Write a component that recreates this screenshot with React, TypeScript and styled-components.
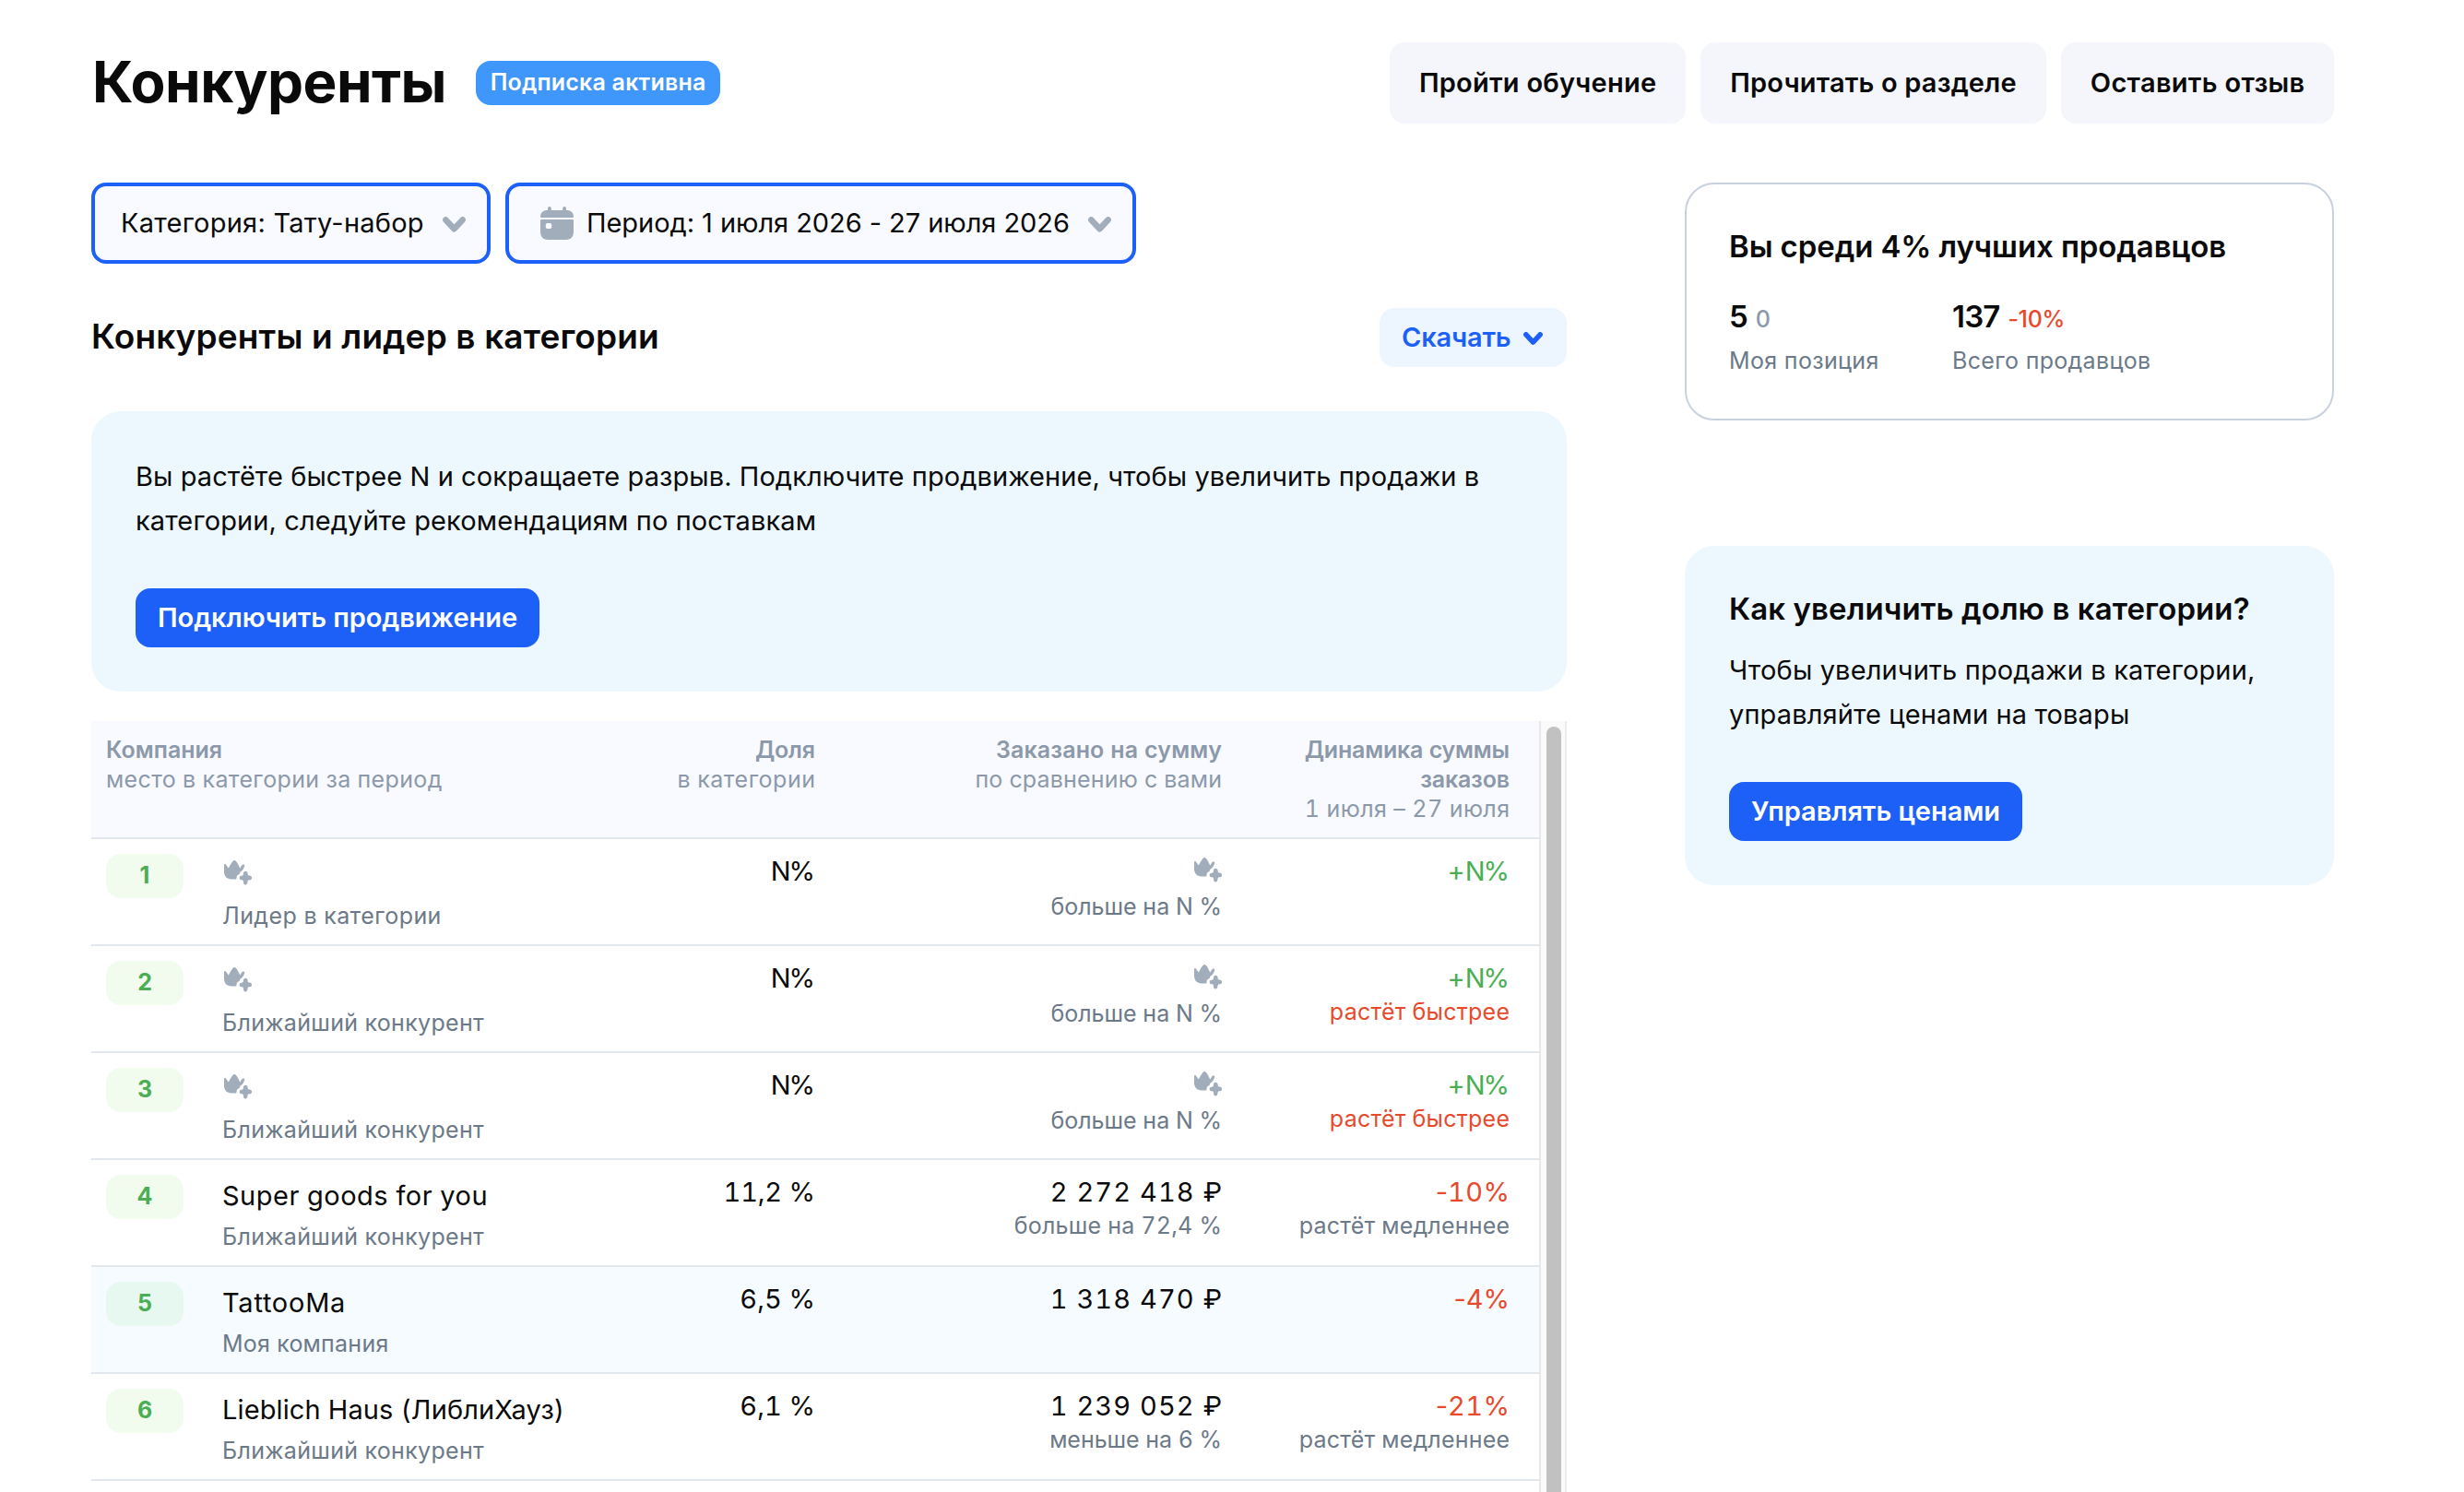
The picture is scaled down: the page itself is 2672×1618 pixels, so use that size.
import React from "react";
import styled, { createGlobalStyle } from "styled-components";

const color = {
  ink: "#0a0a0b",
  muted: "#6b7988",
  faint: "#8b99aa",
  icon: "#a2adbb",
  blue: "#1c60f8",
  badge: "#3f96fb",
  sky: "#ecf7fe",
  red: "#e8492b",
  green: "#4bae54",
  line: "#e2e7ed",
};

const GlobalStyle = createGlobalStyle`
  * { box-sizing: border-box; }
  html, body { margin: 0; background: #fff; }
  body {
    height: 1618px;
    overflow: hidden;
    font-family: Inter, "Liberation Sans", sans-serif;
    font-size: 29px;
    color: ${color.ink};
    -webkit-font-smoothing: antialiased;
  }
  button { font: inherit; border: 0; cursor: pointer; }
`;

const Page = styled.div`
  width: 2672px;
  height: 1618px;
  overflow: hidden;
  padding: 46px 141px 0 99px;
`;

const Track = styled.span<{ $ls: number }>`
  letter-spacing: ${(p) => p.$ls}px;
  margin-right: ${(p) => -p.$ls}px;
`;

const Header = styled.header`
  display: flex;
  align-items: center;
  height: 88px;
`;

const Title = styled.h1`
  margin: 0;
  padding: 0 0 3px 1px;
  font-size: 62px;
  font-weight: 700;
  line-height: 72px;
  letter-spacing: -0.54px;
  width: 417px;
`;

const Badge = styled.span`
  display: flex;
  align-items: center;
  justify-content: center;
  width: 265px;
  height: 48px;
  padding-bottom: 2px;
  border-radius: 16px;
  background: ${color.badge};
  color: #fff;
  font-size: 25px;
  font-weight: 600;
`;

const HeaderActions = styled.div`
  display: flex;
  gap: 16px;
  margin-left: auto;
`;

const GhostButton = styled.button<{ $w: number }>`
  width: ${(p) => p.$w}px;
  height: 88px;
  padding: 0 0 1px;
  border-radius: 16px;
  background: #f5f6fb;
  color: ${color.ink};
  font-weight: 600;
`;

const Columns = styled.div`
  display: flex;
  align-items: flex-start;
  justify-content: space-between;
  margin-top: 64px;
`;

const Main = styled.main`
  width: 1600px;
`;

const Aside = styled.aside`
  width: 704px;
  display: flex;
  flex-direction: column;
  gap: 136px;
`;

const Filters = styled.div`
  display: flex;
  gap: 16px;
`;

const Filter = styled.button<{ $w: number; $left: number }>`
  display: flex;
  align-items: center;
  width: ${(p) => p.$w}px;
  height: 88px;
  padding: 0 23px 1px ${(p) => p.$left}px;
  border: 4px solid ${color.blue};
  border-radius: 16px;
  background: #f9faff;
  color: ${color.ink};
  white-space: nowrap;

  svg:last-child { margin: 3px 0 0 auto; }
`;

const CalendarSvg = styled.svg`
  margin-right: 14px;
`;

const SectionHead = styled.div`
  display: flex;
  align-items: center;
  justify-content: space-between;
  height: 64px;
  margin-top: 48px;
`;

const SectionTitle = styled.h2`
  margin: 0;
  padding-bottom: 3px;
  font-size: 37px;
  font-weight: 600;
  line-height: 48px;
  white-space: nowrap;
`;

const Download = styled.button`
  display: flex;
  align-items: center;
  justify-content: space-between;
  width: 203px;
  height: 64px;
  padding: 0 26px 1px 24px;
  border-radius: 16px;
  background: #edf6fe;
  color: ${color.blue};
  font-weight: 600;

  svg { margin-top: 3px; }
`;

const Notice = styled.section`
  margin-top: 48px;
  padding: 47px 48px 48px;
  border-radius: 32px;
  background: ${color.sky};
`;

const Copy = styled.p`
  margin: 0 0 49px;
  line-height: 48px;
  white-space: nowrap;
`;

const Primary = styled.button<{ $w: number }>`
  display: block;
  width: ${(p) => p.$w}px;
  height: 64px;
  padding: 0 0 1px;
  border-radius: 16px;
  background: ${color.blue};
  color: #fff;
  font-weight: 600;
`;

const TableFrame = styled.section`
  display: flex;
  height: 836px;
  margin-top: 32px;
`;

const Table = styled.div`
  width: 1570px;
  height: 836px;
  overflow: hidden;
  font-variant-numeric: tabular-nums;
`;

const Scrollbar = styled.div`
  width: 30px;
  padding: 6px 4px 0 6px;
  border-left: 2px solid #e8e8e8;
  border-right: 2px solid #ececec;
  background: #fafafa;
`;

const Thumb = styled.div`
  width: 16px;
  height: 900px;
  border-radius: 8px;
  background: #c1c1c1;
`;

const Row = styled.div<{ $mine?: boolean; $head?: boolean }>`
  display: grid;
  grid-template-columns: 124px 421px 224px 441px 312px;
  height: ${(p) => (p.$head ? 128 : 116)}px;
  padding: 15px 32px 0 16px;
  border-bottom: 2px solid ${color.line};
  background: ${(p) => (p.$head ? "#f9faff" : p.$mine ? "#f5fbff" : "#fff")};
`;

const HeadCell = styled.div<{ $right?: boolean; $span?: number; $inset?: number }>`
  grid-column: span ${(p) => p.$span ?? 1};
  padding-left: ${(p) => p.$inset ?? 0}px;
  text-align: ${(p) => (p.$right ? "right" : "left")};
  font-size: 25px;
  line-height: 32px;
  color: ${color.faint};
`;

const HeadTitle = styled.div`
  font-weight: 600;
`;

const Rank = styled.div<{ $mine?: boolean }>`
  width: 84px;
  height: 48px;
  margin-top: 1px;
  border-radius: 16px;
  background: ${(p) => (p.$mine ? "#e6f8ef" : "#f1fcef")};
  color: ${color.green};
  font-size: 25px;
  font-weight: 700;
  line-height: 46px;
  text-align: center;
  font-variant-numeric: normal;
`;

const Cell = styled.div<{ $right?: boolean }>`
  display: flex;
  flex-direction: column;
  align-items: ${(p) => (p.$right ? "flex-end" : "flex-start")};
  white-space: nowrap;
`;

const Name = styled.div`
  height: 52px;
  padding-left: 2px;
  line-height: 48px;
`;

const HiddenName = styled.div`
  height: 52px;
  padding: 7px 0 0 4px;
`;

const HiddenSum = styled.div`
  height: 42px;
  padding-top: 4px;
`;

const Value = styled.div<{ $tone?: string }>`
  line-height: 40px;
  color: ${(p) => p.$tone ?? color.ink};
`;

const Sign = styled.span`
  font-variant-numeric: normal;
`;

const Sub = styled.div<{ $tone?: string; $indent?: number }>`
  padding-left: ${(p) => p.$indent ?? 0}px;
  font-size: 25px;
  line-height: 32px;
  color: ${(p) => p.$tone ?? color.muted};
`;

const RatingCard = styled.section`
  height: 258px;
  padding: 47px 46px;
  border: 2px solid #c8d1dd;
  border-radius: 32px;
`;

const TipCard = styled.section`
  height: 368px;
  padding: 48px;
  border-radius: 32px;
  background: ${color.sky};
`;

const CardTitle = styled.h3<{ $gap: number }>`
  margin: 0 0 ${(p) => p.$gap}px;
  font-size: 33px;
  font-weight: 600;
  line-height: 40px;
  white-space: nowrap;
`;

const Stats = styled.div`
  display: grid;
  grid-template-columns: 242px 1fr;
`;

const StatValue = styled.div`
  display: flex;
  align-items: baseline;
  gap: 8px;
  height: 40px;
  margin-bottom: 12px;
  font-size: 33px;
  font-weight: 600;
  line-height: 40px;
`;

const Delta = styled.span<{ $tone: string }>`
  color: ${(p) => p.$tone};
  font-size: 25px;
  font-weight: 500;
`;

function Chevron({ tint, width }: { tint: string; width: number }) {
  return (
    <svg width={width} height={width * 0.68} viewBox="0 0 25 17" fill="none">
      <path
        d="M3.4 3.4 12.5 13.2 21.6 3.4"
        stroke={tint}
        strokeWidth="6.6"
        strokeLinecap="round"
        strokeLinejoin="round"
      />
    </svg>
  );
}

function Calendar() {
  return (
    <CalendarSvg width="36" height="36" viewBox="0 0 36 36" fill={color.icon}>
      <path d="M8 2a1.9 1.9 0 0 1 3.8 0v2h12.4V2a1.9 1.9 0 0 1 3.8 0v2h1.5A6.5 6.5 0 0 1 36 10.5V11a1 1 0 0 1-1 1H1a1 1 0 0 1-1-1v-.5A6.5 6.5 0 0 1 6.500 4H8Z" />
      <path
        fillRule="evenodd"
        d="M1 14h34a1 1 0 0 1 1 1v11c0 7.500-2.500 10-10 10H10C2.500 36 0 33.500 0 26V15a1 1 0 0 1 1-1Zm6.500 4a1.700 1.700 0 0 0-1.700 1.700v2.600A1.700 1.700 0 0 0 7.500 24h3a1.700 1.700 0 0 0 1.700-1.700v-2.600a1.700 1.700 0 0 0-1.700-1.700Z"
      />
    </CalendarSvg>
  );
}

function CrownPlus() {
  return (
    <svg width="30" height="27" viewBox="0 0 30 27" fill={color.icon}>
      <path d="M0 5.200C0 4.100 1.300 3.700 1.900 4.600L4.800 8.600C6.200 5.800 7.700 3.200 9.400 1 10.300-.2 12-.2 13 1 14.600 3 16 5.600 17.200 8.600L19.500 5.100C20.300 3.900 22.600 4.200 22.200 6.100 21.700 8.300 20.600 10.200 19.200 11.600 17.700 12.100 17.100 13.300 16.700 14.800 14.600 15.500 13.500 17 13.600 18.800L13.200 20.400C11 20.600 7.600 20.600 5.300 20 1.900 19.100 0 16 0 12Z" />
      <path d="M23.300 11.700c1.400 0 2.300 1 2.300 2.500 0 1.600.5 2.400 2 2.400 1.500 0 2.400.9 2.400 2.300s-.9 2.400-2.400 2.400c-1.500 0-2 .6-2.200 2.400-.2 1.800-.9 2.700-2.200 2.700-1.400 0-2.100-.9-2.200-2.700-.1-1.800-.600-2.400-2-2.400-1.400 0-2.300-.9-2.300-2.300s.9-2.300 2.300-2.300c1.400 0 2-.8 2-2.400 0-1.600.900-2.600 2.300-2.600Z" />
    </svg>
  );
}

type Spaced = [string, number];

type Item = {
  name?: Spaced;
  note: Spaced;
  share: Spaced;
  sum?: Spaced;
  compare?: Spaced;
  change: Spaced;
  up?: boolean;
  pace?: Spaced;
  paceAlert?: boolean;
  mine?: boolean;
};

const rival: Spaced = ["Ближайший конкурент", 0.32];
const faster: Spaced = ["растёт быстрее", 0.24];
const slower: Spaced = ["растёт медленнее", 0.2];
const hiddenShare: Spaced = ["N%", -2];
const hiddenCompare: Spaced = ["больше на N %", 0];
const hiddenChange: Spaced = ["+N%", -2];

const items: Item[] = [
  { note: ["Лидер в категории", 0.44], share: hiddenShare, compare: hiddenCompare, change: hiddenChange, up: true },
  { note: rival, share: hiddenShare, compare: hiddenCompare, change: hiddenChange, up: true, pace: faster, paceAlert: true },
  { note: rival, share: hiddenShare, compare: hiddenCompare, change: hiddenChange, up: true, pace: faster, paceAlert: true },
  { name: ["Super goods for you", 0.49], note: rival, share: ["11,2 %", -0.2], sum: ["2 272 418 ₽", 1.1], compare: ["больше на 72,4 %", 0.2], change: ["-10%", 0.4], pace: slower },
  { name: ["TattooMa", 0.75], note: ["Моя компания", 0.25], share: ["6,5 %", 0], sum: ["1 318 470 ₽", 1.1], change: ["-4%", 0], mine: true },
  { name: ["Lieblich Haus (ЛиблиХауз)", 0.12], note: rival, share: ["6,1 %", 0], sum: ["1 239 052 ₽", 1.1], compare: ["меньше на 6 %", -0.05], change: ["-21%", 0.4], pace: slower },
];

function T({ t }: { t: Spaced }) {
  return <Track $ls={t[1]}>{t[0]}</Track>;
}

function CompetitorRow({ item, rank }: { item: Item; rank: number }) {
  const [change, changeSpacing] = item.change;
  return (
    <Row $mine={item.mine}>
      <Rank $mine={item.mine}>{rank}</Rank>
      <Cell>
        {item.name ? <Name><T t={item.name} /></Name> : <HiddenName><CrownPlus /></HiddenName>}
        <Sub $indent={2}><T t={item.note} /></Sub>
      </Cell>
      <Cell $right>
        <Value><T t={item.share} /></Value>
      </Cell>
      <Cell $right>
        {item.sum ? <Value><T t={item.sum} /></Value> : <HiddenSum><CrownPlus /></HiddenSum>}
        {item.compare && <Sub><T t={item.compare} /></Sub>}
      </Cell>
      <Cell $right>
        <Value $tone={item.up ? color.green : color.red}>
          <Sign>{change[0]}</Sign>
          <T t={[change.slice(1), changeSpacing]} />
        </Value>
        {item.pace && <Sub $tone={item.paceAlert ? color.red : color.muted}><T t={item.pace} /></Sub>}
      </Cell>
    </Row>
  );
}

export default function App() {
  return (
    <>
      <GlobalStyle />
      <Page>
        <Header>
          <Title>Конкуренты</Title>
          <Badge><T t={["Подписка активна", 0.2]} /></Badge>
          <HeaderActions>
            <GhostButton $w={321}><T t={["Пройти обучение", 0.24]} /></GhostButton>
            <GhostButton $w={375}><T t={["Прочитать о разделе", 0.16]} /></GhostButton>
            <GhostButton $w={296}><T t={["Оставить отзыв", 0.29]} /></GhostButton>
          </HeaderActions>
        </Header>

        <Columns>
          <Main>
            <Filters>
              <Filter $w={433} $left={28}>
                <T t={["Категория: Тату-набор", 0.24]} />
                <Chevron tint={color.icon} width={25} />
              </Filter>
              <Filter $w={684} $left={34}>
                <Calendar />
                <T t={["Период: 1 июля 2026 - 27 июля 2026", -0.05]} />
                <Chevron tint={color.icon} width={25} />
              </Filter>
            </Filters>

            <SectionHead>
              <SectionTitle><T t={["Конкуренты и лидер в категории", 0.15]} /></SectionTitle>
              <Download>
                <T t={["Скачать", -0.2]} />
                <Chevron tint={color.blue} width={21} />
              </Download>
            </SectionHead>

            <Notice>
              <Copy>
                <T t={["Вы растёте быстрее N и сокращаете разрыв. Подключите продвижение, чтобы увеличить продажи в", 0.07]} />
                <br />
                <T t={["категории, следуйте рекомендациям по поставкам", 0.11]} />
              </Copy>
              <Primary $w={438}><T t={["Подключить продвижение", -0.06]} /></Primary>
            </Notice>

            <TableFrame>
              <Table>
                <Row $head>
                  <HeadCell $span={2}>
                    <HeadTitle>Компания</HeadTitle>
                    <T t={["место в категории за период", 0.34]} />
                  </HeadCell>
                  <HeadCell $right>
                    <HeadTitle><T t={["Доля", -0.2]} /></HeadTitle>
                    <T t={["в категории", 0.5]} />
                  </HeadCell>
                  <HeadCell $right>
                    <HeadTitle><T t={["Заказано на сумму", 0.13]} /></HeadTitle>
                    <T t={["по сравнению с вами", 0.18]} />
                  </HeadCell>
                  <HeadCell $right $inset={72}>
                    <HeadTitle><T t={["Динамика суммы заказов", -0.2]} /></HeadTitle>
                    <T t={["1 июля – 27 июля", 0.4]} />
                  </HeadCell>
                </Row>
                {items.map((item, i) => (
                  <CompetitorRow key={i} item={item} rank={i + 1} />
                ))}
              </Table>
              <Scrollbar>
                <Thumb />
              </Scrollbar>
            </TableFrame>
          </Main>

          <Aside>
            <RatingCard>
              <CardTitle $gap={36}><T t={["Вы среди 4% лучших продавцов", -0.1]} /></CardTitle>
              <Stats>
                <div>
                  <StatValue>5 <Delta $tone={color.faint}>0</Delta></StatValue>
                  <Sub><T t={["Моя позиция", 0.35]} /></Sub>
                </div>
                <div>
                  <StatValue><T t={["137", -0.8]} /> <Delta $tone={color.red}><T t={["-10%", -0.32]} /></Delta></StatValue>
                  <Sub><T t={["Всего продавцов", 0.32]} /></Sub>
                </div>
              </Stats>
            </RatingCard>

            <TipCard>
              <CardTitle $gap={23}><T t={["Как увеличить долю в категории?", 0.09]} /></CardTitle>
              <Copy>
                <T t={["Чтобы увеличить продажи в категории,", 0.14]} />
                <br />
                <T t={["управляйте ценами на товары", 0.12]} />
              </Copy>
              <Primary $w={318}><T t={["Управлять ценами", -0.05]} /></Primary>
            </TipCard>
          </Aside>
        </Columns>
      </Page>
    </>
  );
}
